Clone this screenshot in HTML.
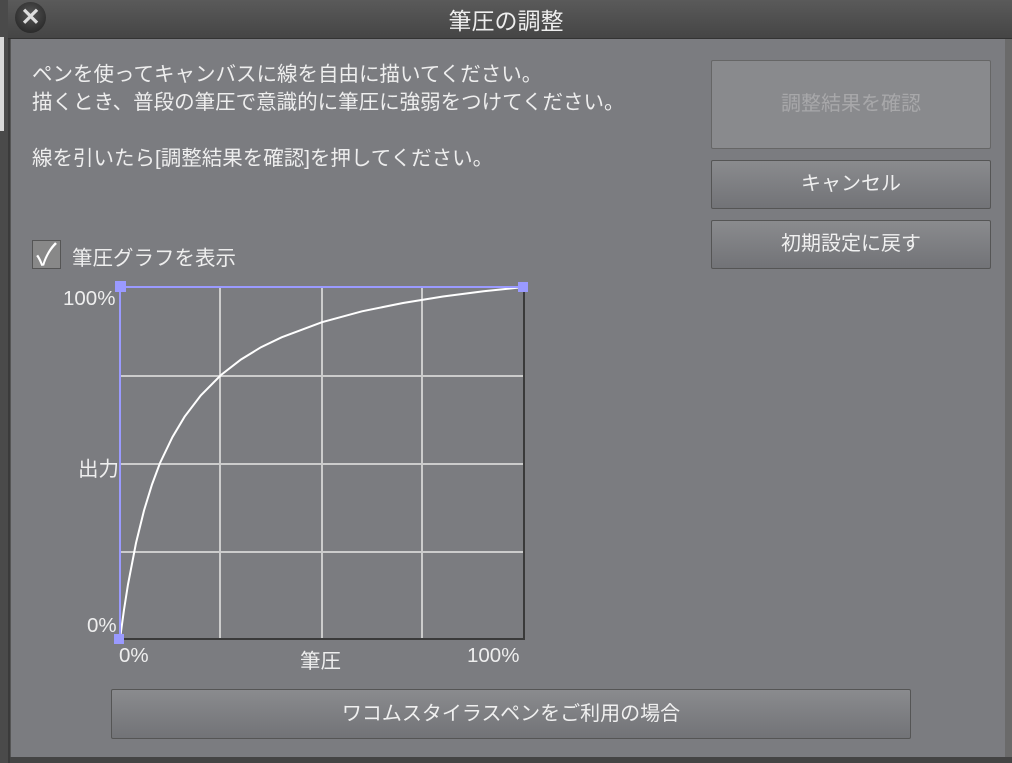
<!DOCTYPE html>
<html><head><meta charset="utf-8"><style>
body{margin:0;width:1012px;height:763px;overflow:hidden;background:#3a3a3a;position:relative;font-family:"Liberation Sans","Noto Sans CJK JP",sans-serif;}
.a{position:absolute}
.t{color:#eee;font-size:20.5px;}
.btn{position:absolute;box-sizing:border-box;border:1px solid #555;border-radius:2px;background:linear-gradient(#8a8b8e,#727377);color:#f0f0f0;font-size:20px;text-align:center;}
</style></head><body>
<div class="a" style="left:0;top:0;width:8px;height:763px;background:#4a4a4a"></div>
<div class="a" style="left:0;top:37px;width:4px;height:94px;background:#d8d8d8"></div>
<div class="a" style="left:8px;top:0;width:1004px;height:38px;background:linear-gradient(#5a5a5a,#454545);border-bottom:1px solid #333"></div>
<div class="a" style="left:15px;top:2px;width:31px;height:31px;border-radius:50%;background:radial-gradient(circle at 50% 40%,#555,#1e1e1e);"></div>
<div class="a" style="left:15px;top:2px;width:31px;height:31px;color:#ddd;font-size:24px;font-weight:bold;text-align:center;line-height:31px">✕</div>
<div class="a" style="left:0;top:2px;width:1012px;text-align:center;color:#eee;font-size:23px">筆圧の調整</div>
<div class="a" style="left:10px;top:39px;width:995px;height:718px;background:#7b7c80;border-left:1px solid #555"></div>
<div class="a" style="left:1005px;top:39px;width:7px;height:724px;background:#6a6a6a"></div>
<div class="a" style="left:10px;top:757px;width:1002px;height:6px;background:#444"></div>
<div class="a t" style="left:32px;top:61px;line-height:28px">ペンを使ってキャンバスに線を自由に描いてください。<br>描くとき、普段の筆圧で意識的に筆圧に強弱をつけてください。<br><br>線を引いたら[調整結果を確認]を押してください。</div>
<div class="a" style="left:32px;top:240px;width:29px;height:29px;box-sizing:border-box;border:1px solid #555;background:#888;color:#fff;font-size:30px;line-height:30px;text-align:center">✓</div>
<div class="a t" style="left:72px;top:241px;">筆圧グラフを表示</div>
<div class="btn" style="left:711px;top:60px;width:280px;height:89px;line-height:87px;background:#898a8d;color:#a8a8aa;border-color:#666">調整結果を確認</div>
<div class="btn" style="left:711px;top:160px;width:280px;height:49px;line-height:47px">キャンセル</div>
<div class="btn" style="left:711px;top:220px;width:280px;height:49px;line-height:47px">初期設定に戻す</div>
<div class="btn" style="left:111px;top:689px;width:800px;height:50px;line-height:48px">ワコムスタイラスペンをご利用の場合</div>
<svg class="a" style="left:0;top:0" width="1012" height="763">
<g stroke="#ccc" stroke-width="2">
<line x1="220" y1="287" x2="220" y2="639"/><line x1="322" y1="287" x2="322" y2="639"/><line x1="422" y1="287" x2="422" y2="639"/>
<line x1="120" y1="376" x2="524" y2="376"/><line x1="120" y1="464" x2="524" y2="464"/><line x1="120" y1="552" x2="524" y2="552"/>
</g>
<path d="M120 287V639H524V287" fill="none" stroke="#3a3a3a" stroke-width="2"/>
<polyline fill="none" stroke="#fff" stroke-width="2" points="120,639 124,609.7 128,584.4 136,543 144,510.5 152,484.5 160,463 172.5,437 184.6,416.7 200.8,395.4 221,375 241,359.5 261,347.2 281.6,337.3 322,322.2 362,311.3 403,303 443,296.5 483.6,291.3 524,287"/>
<path d="M120 639V287H524" fill="none" stroke="#9a9aff" stroke-width="2"/>
<rect x="115" y="281" width="11" height="11" fill="#9a9aff"/>
<rect x="518" y="282" width="10" height="10" fill="#9a9aff"/>
<rect x="114" y="634" width="10" height="10" fill="#9a9aff"/>
</svg>
<div class="a t" style="left:63px;top:287px">100%</div>
<div class="a t" style="left:78px;top:452px">出力</div>
<div class="a t" style="left:87px;top:614px">0%</div>
<div class="a t" style="left:119px;top:644px">0%</div>
<div class="a t" style="left:300px;top:644px">筆圧</div>
<div class="a t" style="left:467px;top:644px">100%</div>
</body></html>
